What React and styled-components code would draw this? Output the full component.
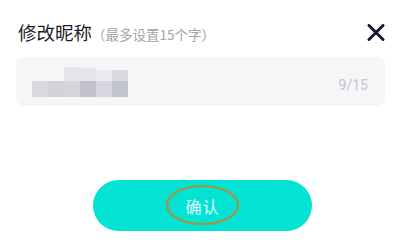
import styled, { createGlobalStyle } from 'styled-components';

const GlobalStyle = createGlobalStyle`
  html, body {
    margin: 0;
    padding: 0;
    background: #ffffff;
  }
  body {
    font-family: "Noto Sans CJK SC", "Noto Sans", sans-serif;
  }
`;

const Sheet = styled.div`
  width: 406px;
  height: 249px;
  box-sizing: border-box;
  padding: 20px 17px 0 16px;
  display: flex;
  flex-direction: column;
  background: #ffffff;
`;

const Header = styled.div`
  display: flex;
  align-items: center;
  justify-content: space-between;
  height: 24px;
  padding-right: 4px;
`;

const TitleGroup = styled.div`
  display: flex;
  align-items: baseline;
  padding-left: 2px;
`;

const Title = styled.span`
  font-size: 18.5px;
  font-weight: 400;
  color: #1b1b2b;
  line-height: 24px;
`;

const Hint = styled.span`
  font-size: 13.5px;
  color: #a3a3ab;
`;

const CloseButton = styled.button`
  width: 18px;
  height: 18px;
  padding: 0;
  border: 0;
  background: none;
  display: flex;
  align-items: center;
  justify-content: center;
  cursor: pointer;
`;

const InputBox = styled.div`
  margin: 13px 4px 0 0;
  height: 49px;
  border-radius: 8px;
  background: #f6f6f9;
  display: flex;
  align-items: center;
  justify-content: space-between;
  padding: 0 17px 0 16px;
`;

const Counter = styled.span`
  font-family: "Roboto", "Noto Sans", sans-serif;
  font-size: 14px;
  color: #c4c4cb;
  margin-top: 7px;
`;

const Confirm = styled.button`
  position: relative;
  margin: 74px auto 0;
  width: 219px;
  height: 51px;
  border: 0;
  border-radius: 26px;
  background: #03e3d4;
  color: #e6fffc;
  font-family: "Noto Sans CJK SC", sans-serif;
  font-size: 16px;
  letter-spacing: 1px;
  display: flex;
  align-items: center;
  justify-content: center;
  cursor: pointer;
`;

const Ring = styled.span`
  position: absolute;
  left: 73px;
  top: 5px;
  width: 69px;
  height: 36px;
  border: 2px solid #b48c35;
  border-radius: 50%;
`;

const bottomRow = ['#d9d9de', '#d3d2d9', '#d5d4db', '#c3c2cb', '#d7d6df', '#c1c4cc'];
const topRow = [
  { x: 32, y: 0, c: '#e5e4ea' },
  { x: 48, y: 1, c: '#e6e6ea' },
  { x: 64, y: 3, c: '#e9e9ee' },
  { x: 80, y: 3, c: '#dadbe0' },
];

const Mosaic = () => (
  <svg width="96" height="30" viewBox="0 0 96 30">
    {topRow.map((b) => (
      <rect key={b.x} x={b.x} y={b.y} width="16" height={14 - b.y} fill={b.c} />
    ))}
    {bottomRow.map((c, i) => (
      <rect key={c} x={i * 16} y="14" width="16" height="16" fill={c} />
    ))}
  </svg>
);

const App = () => (
  <>
    <GlobalStyle />
    <Sheet>
      <Header>
        <TitleGroup>
          <Title>修改昵称</Title>
          <Hint>（最多设置15个字）</Hint>
        </TitleGroup>
        <CloseButton aria-label="关闭">
          <svg width="18" height="17" viewBox="0 0 18 17">
            <path d="M2 1.5 L16 15.5 M16 1.5 L2 15.5" stroke="#1a1a38" strokeWidth="3" strokeLinecap="round" />
          </svg>
        </CloseButton>
      </Header>
      <InputBox>
        <Mosaic />
        <Counter>9/15</Counter>
      </InputBox>
      <Confirm>
        确认
        <Ring />
      </Confirm>
    </Sheet>
  </>
);

export default App;
